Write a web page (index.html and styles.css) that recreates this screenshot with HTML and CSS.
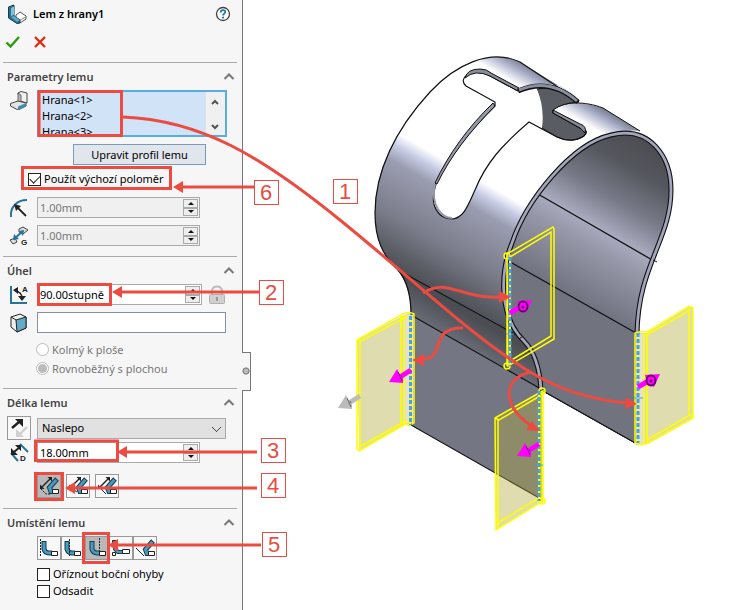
FILE: index.html
```html
<!DOCTYPE html>
<html lang="cs">
<head>
<meta charset="utf-8">
<title>Lem z hrany1</title>
<link rel="stylesheet" href="styles.css">
</head>
<body>
<div class="app">
  <aside class="panel">
    <header class="title">
      <svg class="title-icon" width="20" height="20" viewBox="0 0 20 20"><path d="M9 11l4-3 6 4v3l-6 4-4-3z" fill="#fff" stroke="#555"/><path d="M10 14l3 2 6-3" fill="none" stroke="#888"/><path d="M1.500 3L7 1v11l6 4v3l-3 .5L1.500 14z" fill="#2c6f90" stroke="#173b4d"/><path d="M4 4l3-1.500V11L4 12z" fill="#7fc0d9"/><path d="M4 13l3-1 6 4-3 2z" fill="#5fa9c6"/></svg>
      <h1>Lem z hrany1</h1>
      <button class="plain" aria-label="Nápověda"><svg width="16" height="16" viewBox="0 0 16 16"><circle cx="8" cy="8" r="6.500" fill="#fff" stroke="#444" stroke-width="1.300"/><path d="M5.700 6.400C5.700 3.300 10.400 3.500 10.300 6C10.200 7.500 8.100 7.500 8.100 9.400" fill="none" stroke="#2079a5" stroke-width="1.800"/><circle cx="8.100" cy="11.600" r="1.100" fill="#2079a5"/></svg></button>
    </header>
    <div class="confirm">
      <button class="plain" aria-label="OK"><svg width="16" height="14" viewBox="0 0 16 14"><path d="M1.500 7.500L5.500 11.500L14 2" fill="none" stroke="#2f9a10" stroke-width="2.400"/></svg></button>
      <button class="plain" aria-label="Storno"><svg width="14" height="14" viewBox="0 0 14 14"><path d="M2 2L12 12M12 2L2 12" stroke="#e02b10" stroke-width="2.400"/></svg></button>
    </div>

    <section>
      <h2>Parametry lemu <svg class="caret" width="12" height="8" viewBox="0 0 12 8"><path d="M1.500 6L6 1.500L10.500 6"/></svg></h2>
      <div class="row top">
        <svg class="icon" width="20" height="20" viewBox="0 0 20 20"><path d="M9 3l3-1.500L18 3v10l-7-2z" fill="#f2f2f2" stroke="#444"/><path d="M9 3v9l3 2V5z" fill="#bbb" stroke="#444" stroke-width=".8"/><path d="M1.500 13.500L9 11l8 2v3l-8 4-7.500-4z" fill="#e4e4e4" stroke="#444"/><path d="M9 16.500l8-3.500v3l-8 4z" fill="#3d8db2"/></svg>
        <div class="list">
          <ul><li>Hrana&lt;1&gt;</li><li>Hrana&lt;2&gt;</li><li>Hrana&lt;3&gt;</li></ul>
          <div class="scroll"><svg width="10" height="8" viewBox="0 0 10 8"><path d="M2 6L5 3L8 6"/></svg><svg width="10" height="8" viewBox="0 0 10 8"><path d="M2 2L5 5L8 2"/></svg></div>
        </div>
      </div>
      <div class="center"><button class="wide">Upravit profil lemu</button></div>
      <div class="default-radius"><label class="tick"><input type="checkbox" checked>Použít výchozí poloměr</label></div>
      <div class="row">
        <svg class="icon" width="20" height="20" viewBox="0 0 20 20"><path d="M2 19C1 9 8 2 18 2" fill="none" stroke="#26749a" stroke-width="2"/><path d="M17 18L7 8" stroke="#222" stroke-width="1.800"/><path d="M5 6l7 2-5 5z" fill="#222"/></svg>
        <div class="spin off"><input type="text" value="1.00mm" aria-label="Poloměr ohybu" disabled><span class="steps"><button aria-label="Více" disabled></button><button aria-label="Méně" disabled></button></span></div>
      </div>
      <div class="row">
        <svg class="icon" width="20" height="20" viewBox="0 0 20 20"><path d="M10 3l4-2 5 3-5 4-4-2zM1 14l5-2 2 4-4 2z" fill="#ddd" stroke="#444"/><path d="M5 13l9-8" stroke="#26749a" stroke-width="2"/><path d="M4 14l1-6 5 5zM10 5l5-1-1 6z" fill="#26749a"/><text class="glyph" x="12" y="19">G</text></svg>
        <div class="spin off"><input type="text" value="1.00mm" aria-label="Mezera" disabled><span class="steps"><button aria-label="Více" disabled></button><button aria-label="Méně" disabled></button></span></div>
      </div>
    </section>

    <section>
      <h2>Úhel <svg class="caret" width="12" height="8" viewBox="0 0 12 8"><path d="M1.500 6L6 1.500L10.500 6"/></svg></h2>
      <div class="row">
        <svg class="icon" width="20" height="20" viewBox="0 0 20 20"><path d="M2 1v17h16" fill="none" stroke="#26749a" stroke-width="2"/><path d="M6 6c4 0 7 3 7 7" fill="none" stroke="#222" stroke-width="1.500"/><path d="M4 5l5-3v7zM9 11h8l-4 5z" fill="#222"/><text class="glyph" x="13" y="7">A</text></svg>
        <div class="spin angle"><input type="text" value="90.00stupně" aria-label="Úhel lemu"><span class="steps"><button aria-label="Více"></button><button aria-label="Méně"></button></span></div>
        <svg width="18" height="20" viewBox="0 0 18 20"><path d="M4 10V6c0-6 10-6 10 0v4" fill="none" stroke="#bbb" stroke-width="2"/><rect x="1.500" y="9.500" width="15" height="9" rx="1" fill="#d0d0d0" stroke="#b0b0b0"/><path d="M9 12v4" stroke="#999" stroke-width="2"/></svg>
      </div>
      <div class="row">
        <svg class="icon" width="20" height="20" viewBox="0 0 20 20"><path d="M2 4l9-3 6 3v11l-9 4-6-5z" fill="#eee" stroke="#222"/><path d="M7 7l10-3v11l-9 4z" fill="#64abc9" stroke="#222"/><path d="M2 4l5 3" stroke="#222"/></svg>
        <input class="face" type="text" aria-label="Plocha">
      </div>
      <div class="radios">
        <label><input type="radio" name="orientation" disabled>Kolmý k ploše</label>
        <label><input type="radio" name="orientation" disabled checked>Rovnoběžný s plochou</label>
      </div>
    </section>

    <section class="length">
      <h2>Délka lemu <svg class="caret" width="12" height="8" viewBox="0 0 12 8"><path d="M1.500 6L6 1.500L10.500 6"/></svg></h2>
      <div class="row">
        <button class="tool" aria-label="Obrátit směr"><svg width="22" height="22" viewBox="0 0 22 22"><path d="M4 11l7-6" stroke="#222" stroke-width="2.400"/><path d="M7 2h8v8z" fill="#222"/><path d="M19 10l-7 7" stroke="#d0d0d0" stroke-width="2.400"/><path d="M8 12v8h8z" fill="#d0d0d0"/></svg></button>
        <select aria-label="Koncová podmínka"><option>Naslepo</option></select>
      </div>
      <div class="row">
        <svg class="icon" width="20" height="20" viewBox="0 0 20 20"><path d="M2 10l7 8M11 1l8 8" stroke="#26749a" stroke-width="2"/><path d="M5 9l6-5" stroke="#222" stroke-width="2"/><path d="M6 2h6v6zM2 5v7h7z" fill="#222"/><text class="glyph" x="11" y="18">D</text></svg>
        <div class="spin"><input type="text" value="18.00mm" aria-label="Délka lemu"><span class="steps"><button aria-label="Více"></button><button aria-label="Méně"></button></span></div>
      </div>
      <div class="tools spaced">
        <button class="tool on" aria-label="Vnější virtuální ostrý roh"><svg width="22" height="22" viewBox="0 0 22 22"><use href="#bend"/><path d="M3 14l5 5h5" fill="none" stroke="#222" stroke-dasharray="2 1"/><use href="#measure"/></svg></button>
        <button class="tool" aria-label="Vnitřní virtuální ostrý roh"><svg width="22" height="22" viewBox="0 0 22 22"><use href="#bend"/><path d="M4 13l6 4" fill="none" stroke="#222"/><use href="#measure"/></svg></button>
        <button class="tool" aria-label="Tečný ohyb"><svg width="22" height="22" viewBox="0 0 22 22"><use href="#bend"/><path d="M4 13l6 6" fill="none" stroke="#222"/><use href="#measure"/></svg></button>
      </div>
    </section>

    <section>
      <h2>Umístění lemu <svg class="caret" width="12" height="8" viewBox="0 0 12 8"><path d="M1.500 6L6 1.500L10.500 6"/></svg></h2>
      <div class="tools">
        <button class="tool" aria-label="Materiál uvnitř"><svg width="22" height="22" viewBox="0 0 22 22"><use href="#flange"/><path d="M2.500 2v18" stroke="#222" stroke-dasharray="2 1"/></svg></button>
        <button class="tool" aria-label="Materiál vně"><svg width="22" height="22" viewBox="0 0 22 22"><use href="#flange" x="-1"/><path d="M7.500 2v18" stroke="#222" stroke-dasharray="2 1"/></svg></button>
        <button class="tool on" aria-label="Ohyb vně"><svg width="22" height="22" viewBox="0 0 22 22"><use href="#flange"/><path d="M13.500 1v14" stroke="#222" stroke-dasharray="2 1"/></svg></button>
        <button class="tool" aria-label="Ohyb z virtuálního ostrého rohu"><svg width="22" height="22" viewBox="0 0 22 22"><path d="M5 6v6l3 3h5" fill="none" stroke="#222" stroke-width="4"/><path d="M5 6v6l3 3h5" fill="none" stroke="#4799bd" stroke-width="2.500"/><path d="M2.500 3.500h4v4h-4z" fill="#4799bd" stroke="#222"/><path d="M2.500 15.500h3v3h-3zM12.500 12.500h7v4h-7z" fill="#fff" stroke="#222"/></svg></button>
        <button class="tool" aria-label="Tečně k ohybu"><svg width="22" height="22" viewBox="0 0 22 22"><use href="#bend"/><path d="M2 11l8 8" stroke="#222"/></svg></button>
      </div>
      <div class="checks">
        <label class="tick"><input type="checkbox">Oříznout boční ohyby</label>
        <label class="tick"><input type="checkbox">Odsadit</label>
      </div>
    </section>
    <span class="grip"></span>
  </aside>

  <main class="view">
    <svg class="model" width="500" height="610" viewBox="250 0 500 610" role="img" aria-label="Model s lemy z hrany">
      <defs>
        <g id="bend"><path d="M19 4L11.500 12.500L13 16.500H15" fill="none" stroke="#173b4d" stroke-width="5"/><path d="M18.400 4.700L11.500 12.500L13 16.500H15" fill="none" stroke="#4799bd" stroke-width="3"/><path d="M14.500 14.500h6v4h-6z" fill="#fff" stroke="#222"/></g>
        <g id="measure"><path d="M4 12L12 4" stroke="#222" stroke-width="1.500"/><path d="M9.500 2H14v4.500zM2 9.500V14h4.500z" fill="#222"/></g>
        <g id="flange"><path d="M6 4v8q1 4 5 4h3" fill="none" stroke="#173b4d" stroke-width="5"/><path d="M6 5v7q1 4 5 4h3" fill="none" stroke="#4799bd" stroke-width="3"/><path d="M13.500 14.500h6v4h-6z" fill="#fff" stroke="#222"/></g>
        <linearGradient id="outer" gradientUnits="userSpaceOnUse" x1="103" y1="-179" x2="-20" y2="35">
          <stop offset="0" stop-color="#7b7e90"/><stop offset=".035" stop-color="#a9aec8"/><stop offset=".09" stop-color="#fff"/><stop offset=".5" stop-color="#fff"/><stop offset=".55" stop-color="#c6cbe4"/><stop offset=".61" stop-color="#9a9db0"/><stop offset=".8" stop-color="#7b7d8b"/><stop offset=".92" stop-color="#5c5e66"/><stop offset="1" stop-color="#4b4d52"/>
        </linearGradient>
        <linearGradient id="bendshade" gradientUnits="userSpaceOnUse" x1="-17" y1="30" x2="-34" y2="59"><stop offset="0" stop-color="#4b4d52"/><stop offset="1" stop-color="#6d6f7b"/></linearGradient>
        <linearGradient id="inner" gradientUnits="userSpaceOnUse" x1="103" y1="-179" x2="13" y2="-23">
          <stop offset="0" stop-color="#4a4b50"/><stop offset=".2" stop-color="#55575e"/><stop offset=".4" stop-color="#777987"/><stop offset=".58" stop-color="#a8abbe"/><stop offset=".7" stop-color="#9597a8"/><stop offset="1" stop-color="#6f717e"/>
        </linearGradient>
        <g id="left-arrow"><path d="M11 -5L22 -12" stroke="currentColor" stroke-width="5"/><path d="M0 0L8 -13L10 -9L14 -4L14 1Z" fill="currentColor"/><path d="M9 -10L13 -1M12 -7l1 2" stroke="#000" stroke-opacity=".45" fill="none"/></g>
        <g id="right-arrow"><path d="M-10 6L-22 13" stroke="currentColor" stroke-width="5"/><path d="M0 0L-15 1L-13 9L-6 13Z" fill="currentColor"/><ellipse cx="-9" cy="6.500" rx="4.500" ry="5" fill="currentColor" stroke="#6b006b" stroke-width="1.800"/><circle cx="-9" cy="7" r="1.500" fill="#6b006b"/></g>
      </defs>

      <!-- inside of the clamp and the far leg -->
      <path d="M510 243C525 200 575 140 620 133C655 130 672 160 672 190C672 235 640 270 637 333V444L543 391L505 300Z" fill="url(#inner)" stroke="#111"/>
      <path d="M512 263L635 333V443L543 391Q541 355 522 338Q505 320 505 285Z" fill="#71737f"/>
      <path d="M538 194L654 261M512 263L636 333M543 391L637 444" stroke="#111" stroke-width="1.300"/>

      <!-- outside of the clamp -->
      <path d="M603 108C570 98 560 105 553 110L553 113L580 128Q589 131 584 136Q572 144 557 137L542 128Q544 108 537 89L518 91L527 87Q545 81 560 86L579 98L520 62C490 48 455 65 430 92C395 130 375 172 375 213C375 240 383 256 398 270L522 338C496 314 500 255 522 220C545 178 590 132 625 131Q633 130 640 131Z" fill="url(#outer)"/>
      <path d="M398 270L522 338Q538 350 541 389L411 315Q411 288 398 270Z" fill="url(#bendshade)"/>
      <path d="M411 315L541 389V499L411 425Z" fill="#747683"/>
      <path d="M579 101L520 62C490 48 455 65 430 92C395 130 375 172 375 213C375 240 383 256 398 270Q411 285 411 315V425L541 499V389Q538 350 522 338M398 270L522 338M411 315L541 389" fill="none" stroke="#111" stroke-width="1.200"/>
      <path d="M553 110C563 101 585 101 603 108L640 131" fill="none" stroke="#111"/>

      <!-- slot -->
      <path d="M537 89Q544 108 542 128L557 137Q572 144 584 136Q590 130 580 128L553 113V110Q562 103 579 102Q570 91 553 87Z" fill="#5a5c64" stroke="#111"/>
      <path d="M518 91L490 76Q478 69 467 75Q460 80 466 86L495 102V106C470 130 450 155 436 184C428 207 440 219 452 219C464 218 468 205 475 190C486 163 502 145 529 122L542 129Q545 108 537 89Z" fill="#fff"/>
      <path d="M518 91L490 76Q478 69 467 75Q460 80 466 86L495 102V106C470 130 450 155 436 184C428 207 440 219 452 219C464 218 468 205 475 190C486 163 502 145 529 122L557 137Q572 144 584 136Q590 130 580 128L553 113V110" fill="none" stroke="#111" stroke-width="1.200"/>
      <path d="M518 91L490 76Q475 69 465 78Q467 69 480 69Q487 69 491 73L519 88Z" fill="#8a8d9e" stroke="#111"/>
      <path d="M493 103C468 127 448 155 435 183L437 184C450 157 470 131 495 106Z" fill="#9598a9" stroke="#111"/>
      <path d="M435 184C430 207 443 218 452 218" fill="none" stroke="#9598a9" stroke-width="2"/>
      <path d="M553 110L580 124Q587 126 585 133L580 128L553 113Z" fill="#888b9c" stroke="#111"/>
      <path d="M518 91Q550 77 578 102" fill="none" stroke="#111" stroke-width="5"/><path d="M519 90Q550 77 577 101" fill="none" stroke="#8b8ea0" stroke-width="3"/>

      <!-- cut edge of the sheet -->
      <path d="M541 390Q539 356 524 341C500 318 499 275 512 243C526 201 571 144 611 135C650 125 671 157 671 190C671 240 638 265 637 334" fill="none" stroke="#111" stroke-width="5"/>
      <path d="M541 390Q539 356 524 341C500 318 499 275 512 243C526 201 571 144 611 135C650 125 671 157 671 190C671 240 638 265 637 334" fill="none" stroke="#a3a6bb" stroke-width="2.800"/>
      <path d="M519 339l4-3M653 260l4 2" stroke="#111"/>

      <!-- flange previews -->
      <g class="sheet">
        <path d="M357 340L408 313L414 314V423L405 425L359 451Z"/>
        <path d="M495 418L543 390V501L496 530Z"/>
        <path d="M635 333L647 333L690 306L693 308V419L648 444L635 444Z"/>
      </g>
      <path d="M405 315H413V423H405ZM636 334H645V443H636Z" fill="#e4e2ce"/>
      <g class="wire">
        <path d="M357 340L403 314Q409 311 414 314V423Q409 427 405 424L359 451L357 449ZM360 341V449M357 340L361 341L408 316M401 316V424M404 316V424M359 447L402 423L413 420"/>
        <path d="M495 418L539 393L543 391V501L496 530ZM498 420V527M495 418L499 420L540 396M539 498L496 524M541 392V501"/><circle cx="542" cy="391" r="3"/><circle cx="542" cy="501" r="3"/>
        <path d="M635 333Q642 331 647 332L689 306L693 308V418L648 443Q640 446 635 443ZM644 334V443M647 333V443M689 308V416M645 336L690 310M647 440L690 415L693 418"/>
        <path d="M507 254L553 227L554 229V339L508 366ZM510 257L551 232V336L510 361M507 256V366"/><circle cx="507" cy="256" r="3"/><circle cx="507" cy="366" r="3"/>
      </g>
      <path class="edge-base" d="M410.500 316V425M510 257V366M539 391V501M638 333V443"/>
      <path class="edge" d="M410.500 316V425M510 257V366M539 391V501M638 333V443"/>
      <path d="M506 334h8M535 465h8M634 398h9" stroke="#459fee"/>

      <g color="#f0f"><use href="#left-arrow" x="389" y="382"/><use href="#left-arrow" x="517" y="456"/><use href="#right-arrow" x="532" y="300"/><use href="#right-arrow" x="660" y="374"/></g>
      <use href="#left-arrow" x="338" y="408" color="#bbb"/>
    </svg>
  </main>

  <svg class="notes" width="750" height="610" viewBox="0 0 750 610">
    <g class="frame">
      <path d="M39 91.500H121.500V135.500H39ZM22.500 167.500H170.500V188.500H22.500ZM38.500 284.500H110.500V304.500H38.500ZM35.500 441H117.500V460.500H35.500ZM35.500 473.500H62.500V499.500H35.500ZM83.500 533.500H108.500V562.500H83.500Z"/>
      <path d="M123 117C200 120 260 155 340 220S470 335 530 372Q575 399 628 403M423 293C447 277 460 299 500 297M463 328C428 327 447 358 423 359M531 372C502 378 502 405 530 425M254 187H183M259 292H122M257 452H127M257 488H75M261 545H118"/>
    </g>
    <path class="tips" d="M637 404L626 397L625 409ZM511 297L499 291V303ZM412 360L424 354V366ZM540 431L532 421L526 430ZM173 187L183 181V193ZM112 292L122 286V298ZM117 452L127 446V458ZM65 488L75 482V494ZM108 545L118 539V551Z"/>
    <g class="number">
      <rect x="333.500" y="179.500" width="24" height="24"/><text x="345" y="199">1</text>
      <rect x="259.500" y="280.500" width="24" height="24"/><text x="271" y="300">2</text>
      <rect x="261.500" y="438.500" width="24" height="24"/><text x="273" y="458">3</text>
      <rect x="261.500" y="473.500" width="24" height="24"/><text x="273" y="493">4</text>
      <rect x="262.500" y="532.500" width="24" height="24"/><text x="274" y="552">5</text>
      <rect x="254.500" y="180.500" width="24" height="24"/><text x="266" y="200">6</text>
    </g>
  </svg>
</div>
</body>
</html>
```
FILE: styles.css
```css
* { box-sizing: border-box; }
body { margin: 0; background: #fff; color: #000; font: 11px/16px "Noto Sans", "Open Sans", sans-serif; }
button, input, select { font: inherit; color: inherit; margin: 0; }
svg { display: block; flex: none; }
h1, h2 { margin: 0; font-size: 11px; font-weight: 600; }
.app { position: relative; display: flex; min-height: 100vh; }
.panel { position: relative; flex: none; width: 243px; background: #f6f6f6; border-right: 1px solid #777; }
.title { display: flex; align-items: center; height: 28px; padding: 0 11px 0 7px; }
.title h1 { flex: 1; margin-left: 6px; }
.plain { display: block; padding: 0; border: 0; background: none; }
.confirm { display: flex; align-items: center; gap: 12px; height: 27px; margin-bottom: 7px; padding-left: 5px; }
section { margin: 0 5px 0 3px; padding: 0 11px 10px 4px; border-top: 1px solid #aaa; display: grid; row-gap: 7px; }
h2 { display: flex; justify-content: space-between; align-items: center; height: 27px; margin: 0 -9px -7px 0; padding-top: 1px; color: #444; }
.caret { fill: none; stroke: #777; stroke-width: 2; }
.row { display: flex; align-items: center; gap: 6px; }
.row.top { align-items: flex-start; }
.icon { margin: 0 2px; }
.list { flex: 1; display: flex; height: 47px; border: 2px solid #5aace4; background: #d0e3f7; margin-right: -1px; overflow: hidden; }
.list ul { flex: 1; margin: 0; padding: 0 0 0 3px; list-style: none; }
.scroll { display: flex; flex-direction: column; justify-content: space-between; width: 19px; padding: 6px 4px 4px; background: #f0f0f0; fill: none; stroke: #555; stroke-width: 2; }
.center { padding-left: 66px; }
.wide { display: block; width: 133px; height: 21px; padding: 0; border: 1px solid #7a9ab8; background: #e1e5ec; }
.default-radius { padding-left: 21px; margin-bottom: 4px; }
.tick { display: flex; align-items: center; gap: 3px; height: 14px; }
input[type="checkbox"] { appearance: none; flex: none; width: 13px; height: 13px; border: 1px solid #222; background: #fff; }
input[type="checkbox"]:checked { display: grid; place-items: center; }
input[type="checkbox"]:checked::before { content: ""; width: 9px; height: 5px; margin-bottom: 3px; border: solid #222; border-width: 0 0 1px 1px; transform: rotate(-45deg); }
.spin { display: flex; width: 163px; height: 21px; border: 1px solid #aaa; background: #fff; }
.spin.angle { width: 165px; }
.spin.off { background: #f0f0f0; color: #777; }
.spin input { flex: 1; min-width: 0; padding: 0 0 0 2px; border: 0; background: none; }
.steps { display: flex; flex-direction: column; width: 17px; padding: 1px; }
.steps button { flex: 1; display: grid; place-items: center; min-height: 0; padding: 0; border: 1px solid #aaa; background: #eee; }
.steps button::before { content: ""; border: solid transparent; border-width: 0 3px 3px; border-bottom-color: #111; }
.steps button + button::before { border-width: 3px 3px 0; border-top-color: #111; }
.face { flex: 1; min-width: 0; height: 21px; border: 1px solid #8490a8; background: #fff; }
.glyph { font: bold 8px "Liberation Sans", sans-serif; fill: #222; }
.radios { padding-left: 29px; color: #777; }
.radios label { display: flex; align-items: center; gap: 3px; height: 19px; }
.radios input { appearance: none; width: 13px; height: 13px; border: 1px solid #bbb; border-radius: 50%; background: #fff; }
.radios input:checked { background: radial-gradient(circle, #bbb 4px, #fff 5px); }
.length { row-gap: 2px; }
.length h2 { margin-bottom: -2px; }
select { appearance: none; flex: 1; min-width: 0; height: 21px; padding: 0 4px; border: 1px solid #aaa; border-radius: 0; background: #e1e1e1; background-image: linear-gradient(45deg, transparent 47%, #444 47% 56%, transparent 56%), linear-gradient(-45deg, transparent 47%, #444 47% 56%, transparent 56%); background-position: right 8px top 8px, right 4px top 8px; background-size: 5px 5px; background-repeat: no-repeat; }
.tool { display: grid; place-items: center; flex: none; width: 24px; height: 24px; padding: 0; border: 1px solid #999; background: #f8f8f8; }
.tool.on { background: #b8b8b8; }
.tools { display: flex; padding-left: 30px; }
.tools.spaced { gap: 5px; margin-top: 9px; }
.checks { display: grid; gap: 3px; padding-left: 30px; }
.grip { position: absolute; left: 242px; top: 352px; width: 9px; height: 39px; border: 1px solid #777; border-left: 0; background: radial-gradient(circle at 4px 18px, #bbb 2px, #777 3px, #f6f6f6 4px); }
.view { flex: 1; min-width: 0; padding-left: 7px; overflow: hidden; }
.notes { position: absolute; top: 0; left: 0; pointer-events: none; }
.sheet { fill: rgba(179, 172, 67, .42); }
.wire { fill: none; stroke: #ff0; stroke-width: 1.5; }
.edge-base { fill: none; stroke: #ff0; stroke-width: 2; }
.edge { fill: none; stroke: #459fee; stroke-width: 3; stroke-dasharray: 4 2; }
.frame { fill: none; stroke: #eb4b41; stroke-width: 3; }
.tips { fill: #eb4b41; }
.number rect { fill: #fff; stroke: #eb4b41; }
.number text { fill: #eb4b41; font: 22px "Liberation Sans", sans-serif; text-anchor: middle; }
```
